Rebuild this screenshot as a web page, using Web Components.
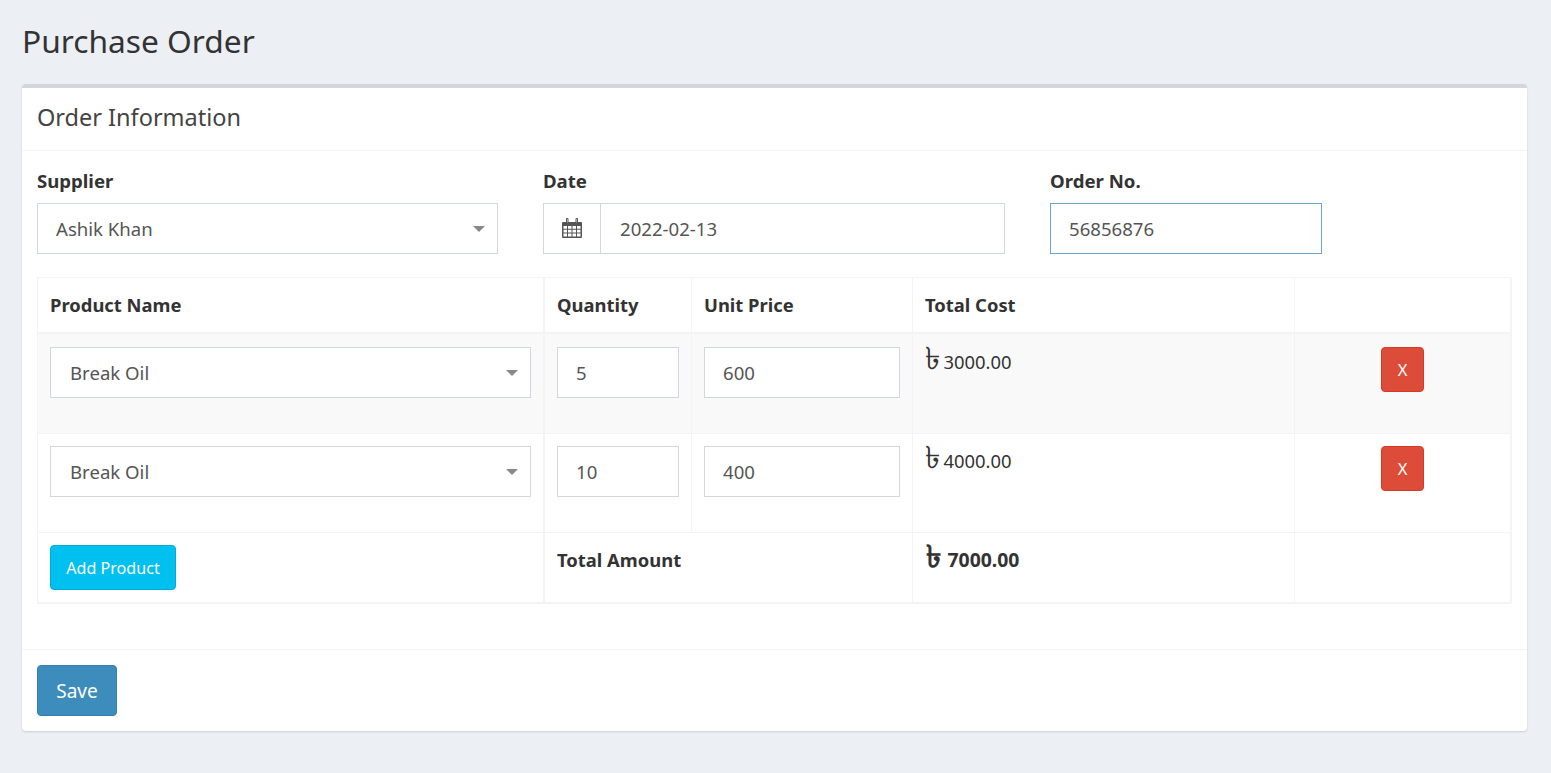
<!DOCTYPE html>
<html>
<head>
<meta charset="utf-8">
<title>Purchase Order</title>
<style>
    html, body { margin: 0; height: 100%; }
    body { background: #ecf0f5; font-family: "Noto Sans", "Liberation Sans", sans-serif; color: #333; }
</style>
</head>
<body>
<po-page heading="Purchase Order">
    <po-card heading="Order Information">
        <po-form-row>
            <po-field label="Supplier"><po-select value="Ashik Khan" pad="18"></po-select></po-field>
            <po-field label="Date"><po-date value="2022-02-13"></po-date></po-field>
            <po-field label="Order No."><po-input value="56856876" focused></po-input></po-field>
        </po-form-row>
        <po-table>
            <po-row kind="head">
                <po-cell><b>Product Name</b></po-cell>
                <po-cell><b>Quantity</b></po-cell>
                <po-cell><b>Unit Price</b></po-cell>
                <po-cell><b>Total Cost</b></po-cell>
                <po-cell></po-cell>
            </po-row>
            <po-row kind="odd">
                <po-cell><po-select value="Break Oil" pad="19"></po-select></po-cell>
                <po-cell><po-input value="5"></po-input></po-cell>
                <po-cell><po-input value="600"></po-input></po-cell>
                <po-cell><po-money>3000.00</po-money></po-cell>
                <po-cell center><po-button color="red" size="x">X</po-button></po-cell>
            </po-row>
            <po-row>
                <po-cell><po-select value="Break Oil" pad="19"></po-select></po-cell>
                <po-cell><po-input value="10"></po-input></po-cell>
                <po-cell><po-input value="400"></po-input></po-cell>
                <po-cell><po-money>4000.00</po-money></po-cell>
                <po-cell center><po-button color="red" size="x">X</po-button></po-cell>
            </po-row>
            <po-row kind="foot">
                <po-cell><po-button color="cyan" size="sm">Add Product</po-button></po-cell>
                <po-cell span="2"><b>Total Amount</b></po-cell>
                <po-cell><po-money bold>7000.00</po-money></po-cell>
                <po-cell></po-cell>
            </po-row>
        </po-table>
        <po-button slot="footer" color="blue" size="lg">Save</po-button>
    </po-card>
</po-page>

<script>
// small helper so each element only has to state its markup and styles
const shadow = (el, html) => {
    el.attachShadow({ mode: 'open' }).innerHTML = html;
};

class PoPage extends HTMLElement {
    connectedCallback() {
        shadow(this, `
            <style>
                :host { display: block; padding: 0 24px 0 22px; }
                h1 { margin: 0; padding: 19px 0 22px; font-size: 31.7px; line-height: 43px; font-weight: 400; color: #333; }
            </style>
            <h1>${this.getAttribute('heading')}</h1>
            <slot></slot>
        `);
    }
}

class PoCard extends HTMLElement {
    connectedCallback() {
        shadow(this, `
            <style>
                :host { display: block; background: #fff; border-top: 4px solid #d2d6de; border-radius: 4px; box-shadow: 0 1px 2px rgba(0,0,0,.15); }
                header { padding: 0 15px; height: 62px; line-height: 58px; font-size: 23.5px; color: #444; border-bottom: 1px solid #f4f4f4; }
                .body { padding: 15px 15px 45px; }
                footer { padding: 15px; height: 51px; border-top: 1px solid #f4f4f4; }
            </style>
            <header>${this.getAttribute('heading')}</header>
            <div class="body"><slot></slot></div>
            <footer><slot name="footer"></slot></footer>
        `);
    }
}

class PoFormRow extends HTMLElement {
    connectedCallback() {
        shadow(this, `
            <style>
                :host { display: grid; grid-template-columns: 461px 462px 272px; column-gap: 45px; margin-bottom: 23px; }
            </style>
            <slot></slot>
        `);
    }
}

class PoField extends HTMLElement {
    connectedCallback() {
        shadow(this, `
            <style>
                :host { display: block; }
                label { display: block; font-weight: 700; font-size: 18.6px; line-height: 29px; margin-bottom: 8px; color: #333; }
            </style>
            <label>${this.getAttribute('label')}</label>
            <slot></slot>
        `);
    }
}

const controlStyle = `
    .box { box-sizing: border-box; height: 51px; border: 1px solid #d2d6de; background: #fff; color: #555; font-size: 18.6px; line-height: 49px; }
`;

class PoInput extends HTMLElement {
    connectedCallback() {
        const focus = this.hasAttribute('focused') ? 'border-color: #6aa5cf;' : '';
        shadow(this, `
            <style>
                :host { display: block; }
                ${controlStyle}
                .box { padding: 0 18px; ${focus} }
            </style>
            <div class="box">${this.getAttribute('value')}</div>
        `);
    }
}

class PoSelect extends HTMLElement {
    connectedCallback() {
        shadow(this, `
            <style>
                :host { display: block; }
                ${controlStyle}
                .box { display: flex; justify-content: space-between; align-items: flex-start; padding: 0 12px 0 ${this.getAttribute('pad')}px; }
                i { align-self: center; width: 0; height: 0; border: 6px solid transparent; border-top-color: #888; border-bottom: 0; }
            </style>
            <div class="box"><span>${this.getAttribute('value')}</span><i></i></div>
        `);
    }
}

class PoDate extends HTMLElement {
    connectedCallback() {
        shadow(this, `
            <style>
                :host { display: block; }
                ${controlStyle}
                .box { display: flex; }
                .addon { flex: 0 0 56px; display: flex; align-items: center; justify-content: center; border-right: 1px solid #d2d6de; }
                .text { padding: 0 19px; }
                svg { display: block; }
            </style>
            <div class="box">
                <div class="addon">
                    <svg width="20" height="21" viewBox="0 0 20 21">
                        <path fill="#555" d="M1 4h3V3h2v1h8V3h2v1h3q1 0 1 1v14q0 1-1 1H1q-1 0-1-1V5q0-1 1-1z"/>
                        <path fill="#fff" d="M1.500 8h3.500v2.700H1.500zM6 8h3.500v2.700H6zM10.500 8h3.500v2.700h-3.500zM15 8h3.500v2.700H15zM1.500 11.700h3.500v2.800H1.500zM6 11.700h3.500v2.800H6zM10.500 11.700h3.500v2.800h-3.500zM15 11.700h3.500v2.800H15zM1.500 15.500h3.500v3H1.500zM6 15.500h3.500v3H6zM10.500 15.500h3.500v3h-3.500zM15 15.500h3.500v3H15z"/>
                        <path fill="#fff" stroke="#555" d="M4.500.5h1.500v4.500H4.500zM14 .5h1.500v4.500H14z"/>
                    </svg>
                </div>
                <div class="text">${this.getAttribute('value')}</div>
            </div>
        `);
    }
}

class PoTable extends HTMLElement {
    connectedCallback() {
        shadow(this, `
            <style>
                :host { display: block; border: 1px solid #f4f4f4; border-bottom-width: 2px; }
            </style>
            <slot></slot>
        `);
    }
}

class PoRow extends HTMLElement {
    connectedCallback() {
        const kind = this.getAttribute('kind');
        const pads = { odd: '13px 12px', head: '12px 12px' };
        const heights = { odd: 100, head: 0, foot: 0 };
        shadow(this, `
            <style>
                :host {
                    --cell-pad: ${pads[kind] || '12px 12px'};
                    display: grid;
                    grid-template-columns: 507px 147px 221px 382px 1fr;
                    min-height: ${kind in heights ? heights[kind] : 99}px;
                    box-sizing: border-box;
                    background: ${kind === 'odd' ? '#f9f9f9' : '#fff'};
                    border-bottom: ${kind === 'head' ? '2px' : kind === 'foot' ? '0' : '1px'} solid #f4f4f4;
                }
            </style>
            <slot></slot>
        `);
    }
}

class PoCell extends HTMLElement {
    connectedCallback() {
        const span = this.getAttribute('span');
        if (span) this.style.gridColumn = 'span ' + span;
        shadow(this, `
            <style>
                :host { display: block; box-sizing: border-box; padding: var(--cell-pad); border-right: 1px solid #f4f4f4; font-size: 18.4px; line-height: 30px; color: #333; }
                :host(:first-child) { border-right-width: 2px; }
                :host([center]) { display: flex; justify-content: center; align-items: flex-start; }
                ::slotted(b) { font-weight: 700; }
            </style>
            <slot></slot>
        `);
    }
}

class PoMoney extends HTMLElement {
    connectedCallback() {
        shadow(this, `
            <style>
                :host { display: inline-block; }
                :host([bold]) { font-weight: 700; font-size: 19.4px; }
                span { font-family: "Lohit Bengali", "Noto Sans", sans-serif; font-size: 31px; line-height: 0; margin-right: 3px; }
                :host([bold]) span { margin: 0 6px 0 1px; }
            </style>
            <span>৳</span><slot></slot>
        `);
    }
}

class PoButton extends HTMLElement {
    connectedCallback() {
        const colors = {
            red: ['#dd4b39', '#d73925'],
            cyan: ['#00c0ef', '#00acd6'],
            blue: ['#3c8dbc', '#367fa9']
        };
        const sizes = {
            x: 'width: 43px; height: 45px; font-size: 16.5px;',
            sm: 'width: 126px; height: 45px; font-size: 16.1px;',
            lg: 'width: 80px; height: 51px; font-size: 19px;'
        };
        const [bg, border] = colors[this.getAttribute('color')];
        shadow(this, `
            <style>
                :host { display: block; width: fit-content; }
                button {
                    display: block; box-sizing: border-box; padding: 0;
                    background: ${bg}; border: 1px solid ${border}; border-radius: 4px;
                    color: #fff; font-family: inherit; ${sizes[this.getAttribute('size')]}
                }
            </style>
            <button><slot></slot></button>
        `);
    }
}

window.customElements.define('po-page', PoPage);
window.customElements.define('po-card', PoCard);
window.customElements.define('po-form-row', PoFormRow);
window.customElements.define('po-field', PoField);
window.customElements.define('po-input', PoInput);
window.customElements.define('po-select', PoSelect);
window.customElements.define('po-date', PoDate);
window.customElements.define('po-table', PoTable);
window.customElements.define('po-row', PoRow);
window.customElements.define('po-cell', PoCell);
window.customElements.define('po-money', PoMoney);
window.customElements.define('po-button', PoButton);
</script>
</body>
</html>
